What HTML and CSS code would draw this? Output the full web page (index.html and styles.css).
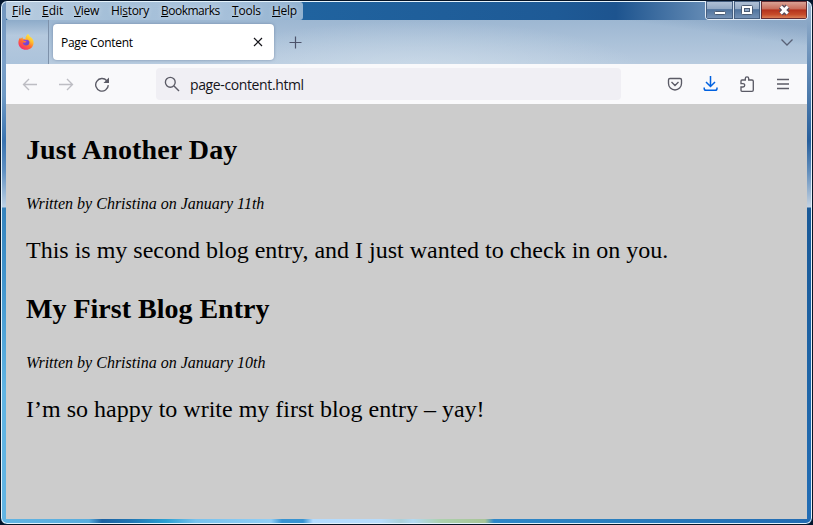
FILE: index.html
```
<!DOCTYPE html>
<html lang="en">
<head>
<meta charset="utf-8">
<title>Page Content</title>
<link rel="stylesheet" href="styles.css">
</head>
<body>
<div class="window">
  <div class="browser">
    <header class="titlebar">
      <nav class="menu">
        <span class="file"><u>F</u>ile</span><span class="edit"><u>E</u>dit</span><span class="view"><u>V</u>iew</span><span class="history">Hi<u>s</u>tory</span><span class="bookmarks"><u>B</u>ookmarks</span><span class="tools"><u>T</u>ools</span><span class="help"><u>H</u>elp</span>
      </nav>
      <div class="controls">
        <span class="control"><svg width="28" height="18"><rect x="8.500" y="10.500" width="11" height="3" rx="1" fill="#fff" stroke="#4b5b73"/></svg></span>
        <span class="control"><svg width="26" height="18"><rect x="7.500" y="4.500" width="11" height="9" rx="1" fill="#fff" stroke="#4b5b73"/><rect x="10.500" y="7.500" width="5" height="3" fill="#91a9c8" stroke="#4b5b73"/></svg></span>
        <span class="control close"><svg width="46" height="18"><path d="M19.800 5.500l6.900 7M26.700 5.500l-6.900 7" stroke="#574b5b" stroke-width="5.500"/><path d="M19.800 5.500l6.900 7M26.700 5.500l-6.900 7" stroke="#fff" stroke-width="3"/></svg></span>
      </div>
    </header>
    <div class="tabs">
      <div class="pinned">
        <svg width="16" height="16" viewBox="0 0 16 16">
          <defs>
            <linearGradient id="flame" x1=".85" y1="0" x2=".2" y2="1"><stop offset="0" stop-color="#fff44f"/><stop offset=".35" stop-color="#ffbd2e"/><stop offset=".6" stop-color="#ff6a32"/><stop offset="1" stop-color="#f5217b"/></linearGradient>
            <linearGradient id="globe" x1="0" y1="0" x2="1" y2="1"><stop offset="0" stop-color="#a23ee0"/><stop offset="1" stop-color="#5a49c9"/></linearGradient>
          </defs>
          <path d="M10 0c1 .8 1.500 1.700 1.700 2.600C14.500 4 15.800 6.400 15.600 9c-.3 4-3.500 6.800-7.600 6.800S.4 12.700.4 8.700c0-2 .7-3.900 1.800-5.200l.5 1.500 1.600-1.900.6 1.600 2.600.4C7.400 3 8.400 1.300 10 0z" fill="url(#flame)"/>
          <path d="M5 6.200c1-.6 1.800-.3 2.600-.1l2-.4c1.600.8 2.200 2.200 1.700 3.600-.5 1.500-1.800 2.200-3.200 2.200-1.800 0-3.300-1.200-3.400-3l2.300.3 1.500-1.200L6.700 7z" fill="url(#globe)"/>
        </svg>
      </div>
      <div class="tab"><span>Page Content</span><svg width="10" height="10"><path d="M1 1l8 8M9 1L1 9" stroke="#15141a" stroke-width="1.200"/></svg></div>
      <svg class="plus" width="13" height="13"><path d="M6.500 .5v12M.5 6.500h12" stroke="#4c536b" stroke-width="1.200"/></svg>
      <svg class="chevron" width="14" height="9"><path d="M1.500 1.500L7 7l5.500-5.500" fill="none" stroke="#596176" stroke-width="1.300"/></svg>
    </div>
    <div class="toolbar">
      <svg class="back" width="16" height="16" viewBox="0 0 16 16"><path d="M15 8.500H1.500M7 3L1.500 8.500 7 14"/></svg>
      <svg class="back" width="16" height="16" viewBox="0 0 16 16"><path d="M1 8.500h13.500M9 3L14.500 8.500 9 14"/></svg>
      <svg class="reload" width="16" height="16" viewBox="0 0 16 16"><path d="M12.800 4.700A6.300 6.300 0 1 0 14.300 9.100"/><path d="M15 1.500v5.400H9.500z" class="solid"/></svg>
      <div class="address">
        <svg width="16" height="16" viewBox="0 0 16 16"><circle cx="6.300" cy="6.300" r="4.900"/><path d="M10 10l5 5"/></svg>
        <span>page-content.html</span>
      </div>
      <div class="actions">
        <svg width="16" height="16" viewBox="0 0 16 16"><path d="M3 2.500h10q1.500 0 1.500 1.500v3.500a6.500 6.500 0 0 1-13 0V4q0-1.500 1.500-1.500zM4.500 6L8 9.500 11.500 6"/></svg>
        <svg class="download" width="16" height="16" viewBox="0 0 16 16"><path d="M7.500 0v10.500M3 6l4.500 4.500L12 6M1.200 11.500v1q0 1.800 1.800 1.800h9.200q1.800 0 1.800-1.800v-1"/></svg>
        <svg width="16" height="16" viewBox="0 0 16 16"><path d="M6.300 4V2.500a1.700 1.700 0 0 1 3.400 0V4H13q1.300 0 1.300 1.300V14q0 1.300-1.300 1.300H3q-1 0-1-1V11h2a1.700 1.700 0 0 0 0-3.400H2V5q0-1 1-1z"/></svg>
        <svg width="16" height="16" viewBox="0 0 16 16"><path d="M2 3.500h12M2 8h12M2 12.500h12"/></svg>
      </div>
    </div>
    <main>
      <article>
        <h2 class="latest">Just Another Day</h2>
        <p class="byline">Written by Christina on January 11th</p>
        <p class="entry">This is my second blog entry, and I just wanted to check in on you.</p>
      </article>
      <article>
        <h2>My First Blog Entry</h2>
        <p class="byline">Written by Christina on January 10th</p>
        <p class="entry">I’m so happy to write my first blog entry – yay!</p>
      </article>
    </main>
  </div>
</div>
</body>
</html>
```
FILE: styles.css
```
* { box-sizing: border-box; }
body { margin: 0; background: #03152c; overflow: hidden; }
svg { display: block; flex: none; fill: none; }
.window {
  width: 813px; height: 525px; padding: 1px 5px 5px 5px;
  border: 1px solid #061426; border-radius: 7px;
  background:
    linear-gradient(90deg, #61b4e3 0, #59addd 88px, #1c62a2 101px, #2075b2 130px, #2ba0d2 165px, #78c2ed 195px, #90cef5 270px, #3793d1 281px, #3793d1 302px, #b3dcff 312px, #b7dcfb 380px, #abd0d8 400px, #b2d9f2 412px, #acd0ad 440px, #a8c497 484px, #2e87c8 493px, #2b80bf 600px, #226bb2 100%) bottom / 100% 6px no-repeat,
    linear-gradient(#7195bd 0, #7ba0c9 60px, #6f9ac5 95px, #3973b0 140px, #5f90c2 170px, #bed2e5 206px, #3583bd 207px, #4295cd 280px, #60b4e3 390px, #61b4e3) left / 6px 100% no-repeat,
    linear-gradient(#9bb3cd 0, #688fb9 60px, #4d7bac 95px, #265e9b 140px, #618dbb 170px, #c4d2e1 206px, #195997 207px, #1f66a8 390px, #226db5) right / 6px 100% no-repeat,
    #226bb2;
  box-shadow: inset 0 0 0 1px #e5f3fc;
}
.browser { height: 517px; display: flex; flex-direction: column; }
.titlebar {
  height: 18px; display: flex; justify-content: space-between; align-items: flex-start;
  background: linear-gradient(90deg, #20639f 300px, #1e5a96 550px, #1d548f 610px, #5f87b2 695px, #819fc0);
}
.menu {
  width: 297px; height: 18px; padding-left: 6px; display: flex; border-radius: 0 3px 3px 3px;
  background: linear-gradient(90deg, #b9cde0, #a4bfd8 35%, #a9c2db 70%, #92b2d0);
  font: 12px/18px "Open Sans", sans-serif; color: #000;
  text-shadow: 0 0 4px #dce7f2;
}
.menu span { white-space: nowrap; }
.menu u { text-underline-offset: 1px; text-decoration-thickness: 1px; }
.file { width: 30px; } .edit { width: 32px; } .view { width: 37px; letter-spacing: -.3px; }
.history { width: 50px; letter-spacing: -.3px; } .bookmarks { width: 71px; letter-spacing: -.5px; }
.tools { width: 40px; letter-spacing: -.2px; } .help { width: 25px; letter-spacing: -.3px; }
.controls {
  position: absolute; left: 705px; top: 1px; display: flex; width: 103px; height: 19px;
  border: 1px solid #e1eaf4; border-top: 0; border-radius: 0 0 4px 4px;
  overflow: hidden;
}
.control {
  height: 18px; border-right: 1px solid #dae4ef; box-shadow: inset 0 0 0 1px #465f80;
  background: linear-gradient(#b4c4d8, #93a9c4 43%, #50739d 48%, #7894b7);
}
.control:nth-child(1) { width: 28px; } .control:nth-child(2) { width: 27px; }
.control.close { width: 46px; border: 0; background: linear-gradient(#dca99d, #c96e5c 43%, #b4321d 50%, #c64c2a 75%, #df8c62); box-shadow: inset 0 0 0 1px #662d32; }
.tabs {
  height: 44px; display: flex; align-items: center; position: relative;
  background:
    radial-gradient(ellipse 230px 54px at 410px 55px, #d1dfebcc, #c9dae900),
    linear-gradient(8deg, #b6c8da00 68%, #6f8fb466 92%) right / 270px 100% no-repeat,
    linear-gradient(#9db7d2, #b8cbdf);
}
.pinned { width: 43px; height: 44px; display: flex; align-items: center; padding-left: 12px; border-right: 1px solid #7d91aa; background: linear-gradient(#8dabc9, #b5c9de 35%, #acc3db); }
.tab {
  width: 221px; height: 36px; margin-left: 4px; padding: 0 11px 0 8px; display: flex; align-items: center; justify-content: space-between;
  background: #fff; border-radius: 4px; box-shadow: 0 0 3px #52688b99;
  font: 12px/18px "Open Sans", sans-serif; letter-spacing: -.27px;
}
.tab span { padding-top: 2px; }
.plus { margin-left: 15px; }
.chevron { margin-left: auto; margin-right: 13px; }
.toolbar { height: 40px; padding: 0 16px; display: flex; align-items: center; background: #f9f9fb; }
.toolbar svg { stroke: #5b5b66; stroke-width: 1.35; }
.toolbar .back { stroke: #bdbdc3; margin-right: 20px; }
.toolbar .solid { fill: #5b5b66; stroke: none; }
.address { width: 465px; height: 32px; margin-left: 46px; padding-left: 8px; display: flex; align-items: center; gap: 10px; border-radius: 4px; background: #f0eff4; color: #15141a; font: 14px/20px "Open Sans", sans-serif; letter-spacing: -.38px; }
.address span { padding-top: 2px; }
.actions { margin-left: auto; display: flex; gap: 20px; }
.toolbar .download { stroke: #0061e0; stroke-width: 1.5; }
main { flex: 1; padding: 29px 20px 0; background: #ccc; color: #000; font-family: "Liberation Serif", serif; }
h2, p { margin: 0; white-space: nowrap; }
article { height: 159px; }
h2 { font-size: 28px; line-height: 34px; }
.latest { letter-spacing: .12px; }
.byline { margin-top: 27px; font: italic 16px/20px "Liberation Serif", serif; }
.entry { margin-top: 22px; font-size: 24px; line-height: 28px; }
```
